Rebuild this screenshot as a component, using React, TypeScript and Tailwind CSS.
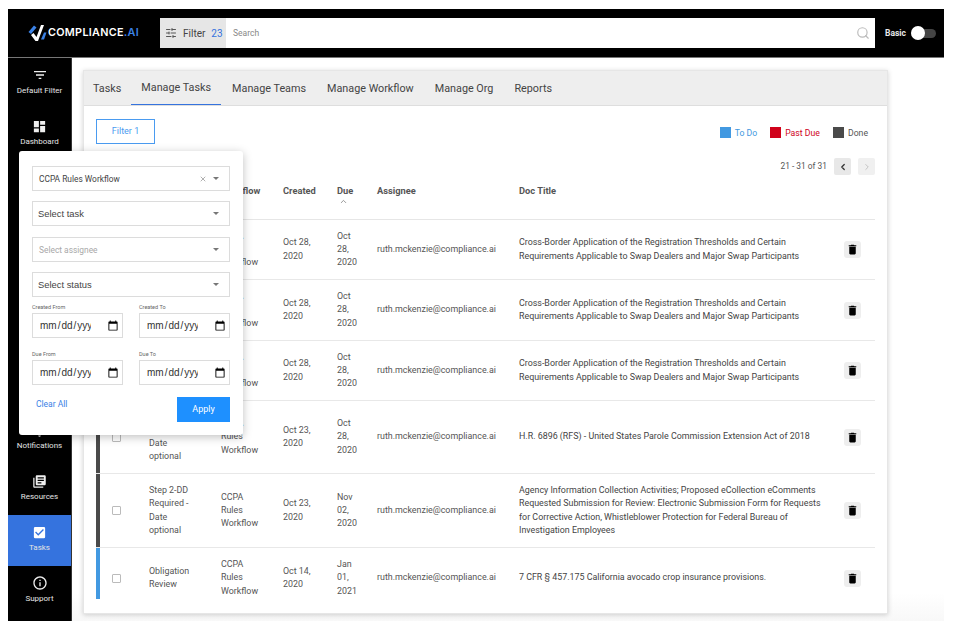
import { ChevronLeft, ChevronRight, ChevronUp, Search, SlidersHorizontal, X } from "lucide-react"
import { MdCheckBox, MdDashboard, MdDelete, MdFilterList, MdInfoOutline, MdLibraryBooks, MdNotifications } from "react-icons/md"

const font = "font-['Roboto',sans-serif]"
const grid = "grid grid-cols-[53px_72px_62px_54px_40px_142px_319px_37px]"

const crossBorder =
  "Cross-Border Application of the Registration Thresholds and Certain Requirements Applicable to Swap Dealers and Major Swap Participants"

const rows = [
  { h: "h-[60px]", bar: "h-full bg-[#4a4a4a]", task: "Step 2-DD Required", created: "Oct 28, 2020", due: "Oct 28, 2020", doc: crossBorder },
  { h: "h-[61px]", bar: "h-full bg-[#4a4a4a]", task: "Step 2-DD Required", created: "Oct 28, 2020", due: "Oct 28, 2020", doc: crossBorder },
  { h: "h-[60px]", bar: "h-full bg-[#4a4a4a]", task: "Step 2-DD Required", created: "Oct 28, 2020", due: "Oct 28, 2020", doc: crossBorder },
  { h: "h-[73px]", bar: "h-full bg-[#4a4a4a]", task: "Step 2-DD Required - Date optional", created: "Oct 23, 2020", due: "Oct 28, 2020", doc: "H.R. 6896 (RFS) - United States Parole Commission Extension Act of 2018" },
  { h: "h-[74px]", bar: "h-full bg-[#4a4a4a]", task: "Step 2-DD Required - Date optional", created: "Oct 23, 2020", due: "Nov 02, 2020", doc: "Agency Information Collection Activities; Proposed eCollection eComments Requested Submission for Review: Electronic Submission Form for Requests for Corrective Action, Whistleblower Protection for Federal Bureau of Investigation Employees" },
  { h: "h-[60px]", bar: "h-[51px] bg-[#4299e1]", task: "Obligation Review", created: "Oct 14, 2020", due: "Jan 01, 2021", doc: "7 CFR § 457.175 California avocado crop insurance provisions." },
]

function Logo() {
  return (
    <svg width="20" height="18" viewBox="0 0 20 18">
      <path d="M0.500 8 L6 1.500 L8.500 3.500 L3 10 Z" fill="#3b82e6" />
      <path d="M3 11 L5.500 9 L8.500 13 L13 1 L16 1 L10 17 L7.500 17 Z" fill="#fff" />
      <path d="M13 15.500 L16 8.500 L18.500 8.500 L16 15.500 Z" fill="#3b82e6" />
    </svg>
  )
}

function SideItem({ icon, label, active }: { icon: React.ReactNode; label: string; active?: boolean }) {
  return (
    <div className={`flex h-[51px] flex-col items-center justify-end pb-[13px] ${active ? "bg-[#3573de]" : ""}`}>
      {icon}
      <span className="mt-[2px] text-[8px] leading-[11px] text-[#e4e4e4]">{label}</span>
    </div>
  )
}

function SelectBox({ label, muted, clear, arial }: { label: string; muted?: boolean; clear?: boolean; arial?: boolean }) {
  return (
    <div className="flex h-[25px] shrink-0 items-center border border-[#dcdcdc] pl-[6px] pr-[10px]">
      <span
        className={`flex-1 pt-[1px] ${arial ? "-ml-px font-['Liberation_Sans',sans-serif] text-[9.400px]" : "text-[8.400px]"} ${muted ? "text-[#a8a8a8]" : "text-[#444]"}`}
      >
        {label}
      </span>
      {clear && <X size={8} className="mr-[6px] text-[#888]" />}
      <span className="h-0 w-0 border-x-[3px] border-t-[3px] border-x-transparent border-t-[#777]" />
    </div>
  )
}

function DateField({ label }: { label: string }) {
  return (
    <div className="w-[91px]">
      <div className="mb-[1px] text-[5.500px] leading-[7px] text-[#666]">{label}</div>
      <input
        type="date"
        className="h-[25px] w-[91px] border border-[#dcdcdc] pl-[6px] pr-[3px] font-['Liberation_Sans',sans-serif] text-[10px] text-[#333] [&::-webkit-calendar-picker-indicator]:ml-auto [&::-webkit-calendar-picker-indicator]:h-[12px] [&::-webkit-calendar-picker-indicator]:w-[12px] [&::-webkit-calendar-picker-indicator]:p-0 [&::-webkit-datetime-edit]:max-w-[52px] [&::-webkit-datetime-edit]:overflow-hidden"
      />
    </div>
  )
}

function Legend({ color, text, label }: { color: string; text: string; label: string }) {
  return (
    <div className="flex items-center gap-[4px]">
      <span className={`h-[11px] w-[11px] ${color}`} />
      <span className={`pt-[3px] text-[8.700px] ${text}`}>{label}</span>
    </div>
  )
}

function TaskRow({ row }: { row: (typeof rows)[number] }) {
  return (
    <div className={`${grid} ${row.h} items-center text-[8.900px] leading-[13.300px] text-[#555]`}>
      <div className="flex h-full items-center">
        <span className={`w-1 self-start ${row.bar}`} />
        <span className="ml-[12px] h-[9px] w-[9px] rounded-[1px] border border-[#bbb] bg-white" />
      </div>
      <div className="pr-[20px]">{row.task}</div>
      <div className="pr-[20px]">CCPA Rules Workflow</div>
      <div className="pr-[10px]">{row.created}</div>
      <div className="pr-[13px]">{row.due}</div>
      <div>ruth.mckenzie@compliance.ai</div>
      <div className="pr-[10px] text-[#444]">{row.doc}</div>
      <div className="flex justify-start pl-[6px]">
        <span className="flex h-[17px] w-[17px] items-center justify-center rounded-[3px] bg-[#eee]">
          <MdDelete size={13} className="text-black" />
        </span>
      </div>
    </div>
  )
}

export default function App() {
  return (
    <div className={`relative h-[632px] w-[954px] overflow-hidden bg-white pb-[11px] pl-2 pr-[10px] pt-[9px] ${font}`}>
      <header className="flex h-[49px] items-center border-b border-[#777] bg-black">
        <div className="flex w-[152px] items-center pl-[20px]">
          <Logo />
          <span className="font-['Inter',sans-serif] text-[10.800px] font-semibold tracking-[0.3px] text-white">
            COMPLIANCE<span className="text-[#3b82e6]">.AI</span>
          </span>
        </div>
        <div className="flex h-[30px] w-[66px] items-center gap-[6px] bg-[#e6e6e6] pl-[5px] text-[10px] text-[#444]">
          <SlidersHorizontal size={12} className="text-[#555]" />
          <span>Filter</span>
          <span className="text-[#3573de]">23</span>
        </div>
        <div className="flex h-[30px] w-[649px] items-center justify-between bg-white pl-[7px] pr-[5px]">
          <span className="text-[8.500px] text-[#888]">Search</span>
          <Search size={14} className="text-[#bbb]" />
        </div>
        <span className="ml-[10px] text-[8.500px] font-bold text-[#e8e8e8]">Basic</span>
        <div className="relative ml-[5px] h-[9px] w-[25px] rounded-full bg-[#444]">
          <span className="absolute -top-[3px] left-0 h-[14px] w-[14px] rounded-full bg-white" />
        </div>
      </header>

      <div className="flex h-[563px]">
        <nav className="flex w-[64px] shrink-0 flex-col border-r border-[#333] bg-black">
          <SideItem icon={<MdFilterList size={16} className="text-[#eee]" />} label="Default Filter" />
          <SideItem icon={<MdDashboard size={15} className="text-[#eee]" />} label="Dashboard" />
          <div className="h-[253px]" />
          <SideItem icon={<MdNotifications size={15} className="text-[#eee]" />} label="Notifications" />
          <SideItem icon={<MdLibraryBooks size={15} className="text-[#eee]" />} label="Resources" />
          <SideItem active icon={<MdCheckBox size={15} className="text-white" />} label="Tasks" />
          <SideItem icon={<MdInfoOutline size={16} className="text-[#eee]" />} label="Support" />
        </nav>

        <main className="flex-1 bg-gradient-to-b from-white from-95% to-[#f8f8f8] pl-[11px] pt-[12px]">
          <div className="h-[544px] w-[805px] border border-[#e6e6e6] bg-white shadow-[0_1px_5px_rgba(0,0,0,0.18)]">
            <div className="flex h-[35px] items-stretch gap-px border-b border-[#dedede] bg-[#eeeeee] text-[10.800px] text-[#444]">
              <div className="flex items-center px-[9px] pt-[3px]">Tasks</div>
              <div className="flex items-center border-b border-[#3573de] px-[10px] pt-[1px]">Manage Tasks</div>
              <div className="flex items-center px-[10px] pt-[3px]">Manage Teams</div>
              <div className="flex items-center px-[10px] pt-[3px]">Manage Workflow</div>
              <div className="flex items-center px-[10px] pt-[3px]">Manage Org</div>
              <div className="flex items-center px-[10px] pt-[3px]">Reports</div>
            </div>

            <div className="px-[12px]">
              <div className="flex items-center justify-between pt-[13px]">
                <button className="flex h-[25px] w-[59px] items-center justify-center border border-[#4a9bf0] pt-[1px] text-[9px] text-[#4a9bf0]">
                  Filter 1
                </button>
                <div className="flex gap-[13px] pr-[7px] pt-[2px]">
                  <Legend color="bg-[#4299e1]" text="text-[#4299e1]" label="To Do" />
                  <Legend color="bg-[#d0021b]" text="text-[#d0021b]" label="Past Due" />
                  <Legend color="bg-[#4a4a4a]" text="text-[#555]" label="Done" />
                </div>
              </div>

              <div className="mt-[14px] flex h-[17px] items-center justify-end gap-[7px]">
                <span className="text-[8.400px] text-[#555]">21 - 31 of 31</span>
                <span className="flex h-[17px] w-[17px] items-center justify-center rounded-[2px] bg-[#e8e8e8]">
                  <ChevronLeft size={10} strokeWidth={3} className="text-[#333]" />
                </span>
                <span className="flex h-[17px] w-[17px] items-center justify-center rounded-[2px] bg-[#f0f0f0]">
                  <ChevronRight size={10} className="text-[#bbb]" />
                </span>
              </div>

              <div className={`${grid} h-[45px] border-b border-[#e6e6e6] pt-[9px] text-[9.300px] font-bold leading-[13px] text-[#555]`}>
                <div />
                <div>Task</div>
                <div>
                  Workflow
                  <ChevronUp size={9} className="ml-[6px] text-[#777]" />
                </div>
                <div>Created</div>
                <div>
                  Due
                  <ChevronUp size={9} className="ml-[2px] text-[#777]" />
                </div>
                <div>Assignee</div>
                <div>Doc Title</div>
                <div />
              </div>

              <div className="divide-y divide-[#e8e8e8]">
                {rows.map((row, i) => (
                  <TaskRow key={i} row={row} />
                ))}
              </div>
            </div>
          </div>
        </main>
      </div>

      <div className="absolute left-[19px] top-[151px] flex h-[284px] w-[224px] flex-col rounded-[3px] bg-white px-[13px] pb-[12px] pt-[15px] shadow-[0_2px_10px_rgba(0,0,0,0.25)]">
        <SelectBox label="CCPA Rules Workflow" clear />
        <div className="mt-[10px]">
          <SelectBox label="Select task" arial />
        </div>
        <div className="mt-[11px]">
          <SelectBox label="Select assignee" muted />
        </div>
        <div className="mt-[10px]">
          <SelectBox label="Select status" arial />
        </div>
        <div className="mt-[7px] flex justify-between">
          <DateField label="Created From" />
          <DateField label="Created To" />
        </div>
        <div className="mt-[13px] flex justify-between">
          <DateField label="Due From" />
          <DateField label="Due To" />
        </div>
        <div className="mt-[12px] flex items-start justify-between">
          <span className="pl-[4px] pt-[1px] text-[8.500px] text-[#3b82e6]">Clear All</span>
          <button className="h-[25px] w-[53px] bg-[#1e90ff] text-[9px] text-white">Apply</button>
        </div>
      </div>
    </div>
  )
}
